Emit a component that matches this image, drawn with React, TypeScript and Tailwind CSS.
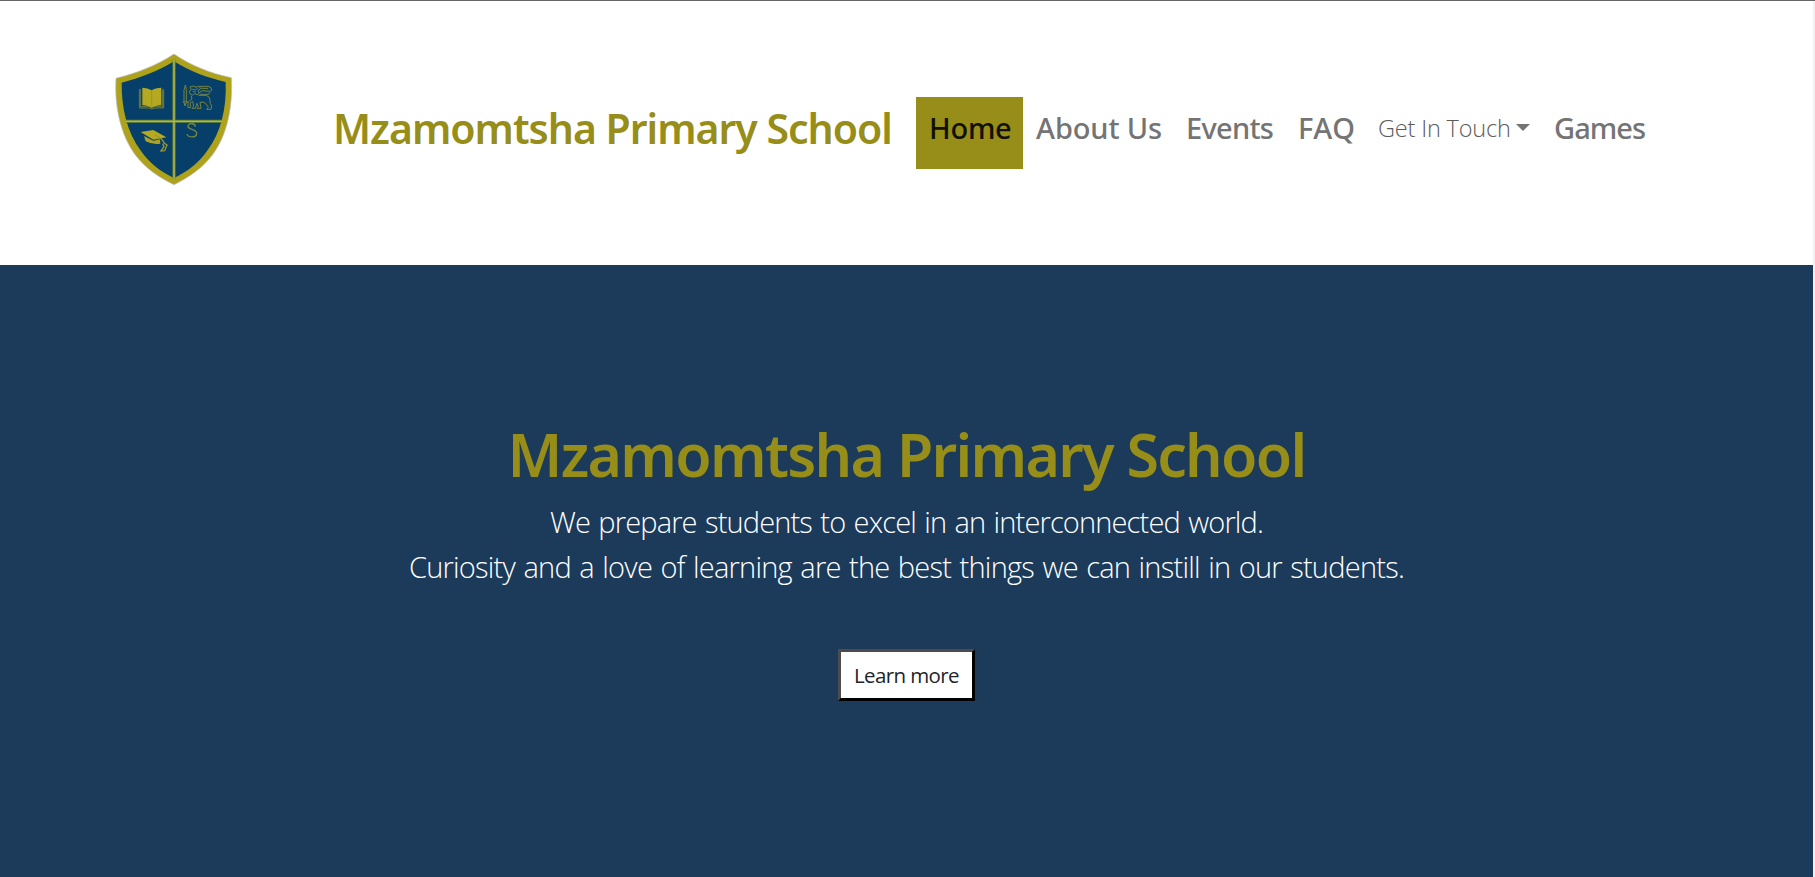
function Crest() {
  return (
    <svg viewBox="0 0 450 480" className="h-[160px] w-[150px] shrink-0" aria-label="School crest">
      <path d="M222 42C270 75 330 100 394 113C399 200 382 285 337 345C307 385 265 413 222 434C178 413 136 385 106 345C62 285 43 200 48 115C112 99 172 75 222 42Z" fill="#aea21a" stroke="#b9bac4" strokeWidth="2" />
      <path d="M222 64C268 93 322 114 377 126C380 203 364 277 321 333C295 370 262 395 222 414C182 395 149 370 123 333C81 277 64 203 65 128C120 114 176 93 222 64Z" fill="#053f6a" />
      <path d="M222 58V418M78 244H366" stroke="#6f8a35" strokeWidth="9" />
      <path d="M222 58V418M78 244H366" stroke="#b3b845" strokeWidth="4" />
      <path d="M127 143Q144 143 155 151Q166 143 184 143V196Q166 195 155 204Q144 195 127 196Z" fill="#b5a922" />
      <path d="M123 149H118V204H146L155 207L165 204H191V149H187M122 151V200H148M188 151V200H163" fill="none" stroke="#a39c2b" strokeWidth="2" />
      <path d="M155 152V200" stroke="#8d8c33" strokeWidth="2" />
      <path d="M122 276L160 270L199 292L160 299Z" fill="#b5a922" />
      <path d="M132 288L137 304Q158 315 181 311L180 298L160 302Z" fill="#aaa126" />
      <path d="M165 285Q188 296 193 310L201 315L194 332L183 333L192 320L188 311" fill="none" stroke="#9c9833" strokeWidth="4" />
      <path d="M286 260C284 246 263 249 264 260C265 269 290 268 290 280C289 295 263 293 261 282" fill="none" stroke="#76883f" strokeWidth="4" />
      <g fill="none" stroke="#74833f" strokeWidth="3" strokeLinejoin="round" strokeLinecap="round">
        <path d="M256 136L252 150V187L255 198L259 187V150Z" />
        <path d="M249 186H263" />
        <path d="M271 162L267 155L274 149L270 141L280 138L288 142L297 138L302 146L294 151L298 159L291 164L283 161L277 166L271 162M278 148L286 150L292 146M279 155L287 156" />
        <path d="M300 139H324L333 143L335 151L329 154L308 152L300 156M305 145H323M300 163H326L329 158" />
        <path d="M296 166L318 166Q330 169 330 180Q328 190 335 198L333 208H320L325 202L317 190Q310 184 300 187L303 205H291L295 200L291 190L286 205H276L281 199L278 184L270 190L272 202L264 203L264 187L276 177L274 169" />
      </g>
    </svg>
  );
}

export default function App() {
  return (
    <div className="h-[877px] w-full overflow-hidden border-t border-[#666] bg-white font-['Noto_Sans',sans-serif]">
      <div className="h-full border-r-2 border-[#f1f1f1]">
        <header className="flex h-[264px] items-start pl-[100px]">
          <div className="pt-[39px]">
            <Crest />
          </div>
          <nav className="flex items-start pt-24 pl-[83px] text-[29px] leading-[46px] font-medium whitespace-nowrap text-[#747474]">
            <a className="w-[583px] pt-2 text-[41px] font-semibold tracking-[-1px] text-[#978d19]">Mzamomtsha Primary School</a>
            <a className="mr-[13px] h-[72px] w-[107px] bg-[#978d19] pt-2 pl-[13px] tracking-[-0.25px] text-[#111002]">Home</a>
            <a className="w-[150px] pt-2 tracking-[-0.12px]">About Us</a>
            <a className="w-28 pt-2 tracking-[-0.72px]">Events</a>
            <a className="w-20 pt-2 tracking-[0.6px]">FAQ</a>
            <a className="flex w-44 items-start pt-2 font-['Open_Sans',sans-serif] text-[23.5px] font-light tracking-[-0.17px] text-[#5c5c5c]">
              Get In Touch
              <svg viewBox="0 0 14 7" className="mt-[19px] ml-[5px] h-[7px] w-[14px] text-[#747474]" fill="currentColor">
                <path d="M0 0H14L7 7Z" />
              </svg>
            </a>
            <a className="pt-2 tracking-[-0.95px]">Games</a>
          </nav>
        </header>
        <main className="flex h-[612px] flex-col items-center bg-[#1c3a5a] pt-[153px]">
          <h1 className="text-[59px] leading-[72px] font-semibold tracking-[-1.7px] text-[#978d19]">Mzamomtsha Primary School</h1>
          <div className="mt-[9px] text-center font-['Open_Sans',sans-serif] text-[29px] leading-[45px] font-light whitespace-nowrap text-white">
            <p className="tracking-[-0.85px] [word-spacing:1.6px]">We prepare students to excel in an interconnected world.</p>
            <p className="tracking-[-0.76px] [word-spacing:1.6px]">Curiosity and a love of learning are the best things we can instill in our students.</p>
          </div>
          <button className="mt-[60px] h-[52px] w-[137px] border-3 border-t-[#4c4c4c] border-r-black border-b-black border-l-[#4c4c4c] bg-white font-['Open_Sans',sans-serif] text-[20.5px] leading-[46px] tracking-[-0.6px] text-[#212529]">
            Learn more
          </button>
        </main>
      </div>
    </div>
  );
}
